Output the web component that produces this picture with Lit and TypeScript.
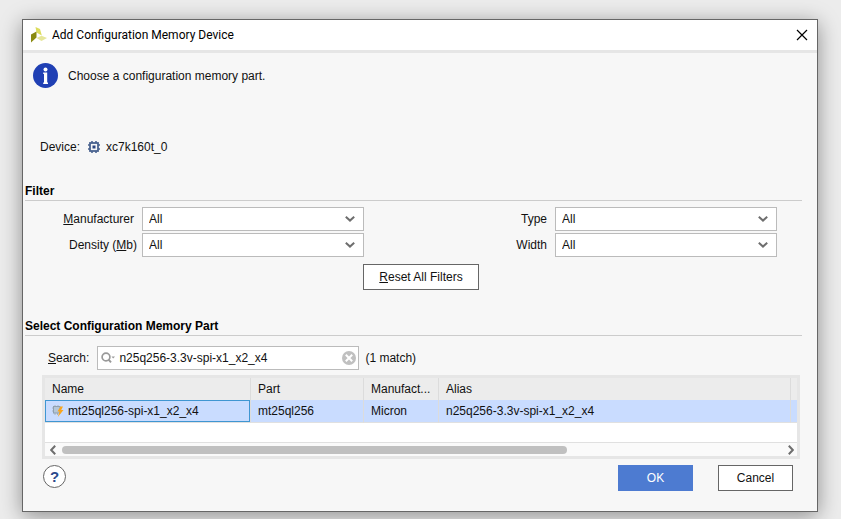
import { LitElement, html, css, svg } from "lit";
import { customElement, state } from "lit/decorators.js";

interface MemoryPart {
  name: string;
  part: string;
  manufacturer: string;
  alias: string;
}

const PARTS: MemoryPart[] = [
  {
    name: "mt25ql256-spi-x1_x2_x4",
    part: "mt25ql256",
    manufacturer: "Micron",
    alias: "n25q256-3.3v-spi-x1_x2_x4",
  },
];

const chevron = html`<svg class="chevron" width="10" height="6" viewBox="0 0 10 6" aria-hidden="true">
  <path d="M0.8 0.8 L5 4.6 L9.2 0.8" fill="none" stroke="#6e6e6e" stroke-width="2" />
</svg>`;

const chipPins = [4, 8].map(
  (p) => svg`<path stroke-width="1.6" d="M${p} 0V2 M${p} 10V12 M0 ${p}H2 M10 ${p}H12" />`
);

@customElement("app-root")
export class AppRoot extends LitElement {
  @state() private query = "n25q256-3.3v-spi-x1_x2_x4";

  static styles = css`
    :host {
      display: block;
      box-sizing: border-box;
      min-height: 100vh;
      padding: 19px 23px 7px 22px;
      background: #ececec;
      color: #111;
      font: 12px/16px "Liberation Sans", Arial, sans-serif;
      overflow: hidden;
    }
    * {
      box-sizing: border-box;
    }
    button,
    input,
    select {
      font: inherit;
      color: inherit;
      margin: 0;
      border-radius: 0;
    }
    svg {
      display: block;
      flex: none;
    }
    .dialog {
      border: 1px solid #666;
      background: #f7f7f7;
      box-shadow: 0 4px 20px rgba(0, 0, 0, 0.4);
    }
    .titlebar {
      display: flex;
      align-items: center;
      height: 33px;
      padding: 0 9px 0 8px;
      background: #fff;
      border-bottom: 3px solid #e6e6e6;
    }
    .title {
      flex: 1;
      margin: 0 0 0 5px;
      font: 12px/16px Roboto, "Open Sans", sans-serif;
      color: #000;
    }
    .plain {
      display: grid;
      place-items: center;
      padding: 0;
      border: 0;
      background: none;
    }
    .intro {
      display: flex;
      align-items: center;
      gap: 10px;
      padding: 10px 10px 0;
    }
    .intro p {
      margin: 0;
    }
    .device {
      display: flex;
      align-items: center;
      margin: 51px 0 0 17px;
    }
    .device svg {
      margin: 0 6px 0 8px;
    }
    .group {
      margin-left: 2px;
    }
    .heading {
      margin: 28px 15px 0 0;
      padding-bottom: 1px;
      border-bottom: 1px solid #ccc;
      font: bold 12px/16px "Liberation Sans", Arial, sans-serif;
      color: #000;
    }
    .filters {
      display: grid;
      grid-template-columns: 117px 1fr 191px 1fr;
      row-gap: 2px;
      align-items: center;
      padding: 6px 40px 0 0;
    }
    .filters label {
      text-align: right;
      padding-right: 8px;
    }
    .filters .snug {
      padding-right: 5px;
    }
    .combo {
      display: grid;
      position: relative;
      height: 24px;
    }
    .combo select {
      appearance: none;
      width: 100%;
      height: 24px;
      padding: 0 28px 0 6px;
      border: 1px solid #bbb;
      background: #fff;
    }
    .chevron {
      position: absolute;
      right: 9px;
      top: 9px;
      pointer-events: none;
    }
    .button {
      height: 26px;
      padding: 0;
      border: 1px solid #666;
      background: #fff;
      text-align: center;
    }
    .reset {
      display: block;
      width: 116px;
      margin: 7px auto 0;
    }
    .search {
      display: flex;
      align-items: center;
      margin: 10px 0 0 23px;
    }
    .search output {
      margin-left: 6px;
    }
    .field {
      display: flex;
      align-items: center;
      width: 262px;
      height: 24px;
      margin-left: 8px;
      padding: 0 2px 0 3px;
      border: 1px solid #bbb;
      background: #fff;
    }
    .field input {
      flex: 1;
      min-width: 0;
      height: 22px;
      padding: 0 0 0 4px;
      border: 0;
      outline: 0;
      background: none;
    }
    .results {
      margin: 5px 17px 0 17px;
      border: 3px solid #e6e6e6;
      background: #fff;
    }
    table {
      width: 100%;
      table-layout: fixed;
      border-collapse: separate;
      border-spacing: 0;
    }
    th,
    td {
      padding: 0 0 0 7px;
      border-right: 1px solid #dcdcdc;
      text-align: left;
      font-weight: normal;
      white-space: nowrap;
      overflow: hidden;
      text-overflow: ellipsis;
    }
    th {
      height: 22px;
      background: #ececec;
    }
    td {
      height: 23px;
      background: #c9dcff;
      border-bottom: 1px solid #e0e0e0;
    }
    th:last-child,
    td:last-child {
      padding: 0;
      border-right: 0;
    }
    .focused {
      box-shadow: inset 0 0 0 1px #3f96d2;
    }
    .cell {
      display: flex;
      align-items: center;
      gap: 4px;
    }
    .c-name {
      width: 206px;
    }
    .c-part {
      width: 113px;
    }
    .c-maker {
      width: 75px;
    }
    .c-rest {
      width: 6px;
    }
    .scroll {
      display: flex;
      align-items: center;
      height: 14px;
      margin-top: 19px;
      padding: 0 3px 0 5px;
      border-top: 1px solid #e0e0e0;
      background: #fafafa;
    }
    .track {
      flex: 1;
      margin: 0 5px 0 6px;
    }
    .thumb {
      width: 70%;
      height: 8px;
      border-radius: 4px;
      background: #c0c0c0;
    }
    .footer {
      display: flex;
      align-items: flex-start;
      padding: 6px 24px 20px 20px;
    }
    .help {
      width: 23px;
      height: 23px;
      margin-right: auto;
      border: 1px solid #666;
      border-radius: 50%;
      background: #fff;
      color: #2b4a8b;
      font: bold 15px/20px "Liberation Sans", Arial, sans-serif;
    }
    .footer .button {
      width: 75px;
      margin-left: 25px;
    }
    .footer .primary {
      border-color: #4d7bd1;
      background: #4d7bd1;
      color: #fff;
    }
  `;

  private combo(id: string) {
    return html`<span class="combo">
      <select id=${id}><option>All</option></select>${chevron}
    </span>`;
  }

  render() {
    const matches = PARTS.filter((p) => p.alias.includes(this.query));
    return html`
      <main class="dialog" role="dialog" aria-labelledby="title">
        <header class="titlebar">
          <svg width="16" height="16" viewBox="0 0 16 16" aria-hidden="true">
            <path d="M4.5 0L9 2L10.8 8.5L5.5 5.5Z" fill="#dcdc5c" />
            <path d="M0 7.5L5.5 4.5V10.5L0 15.5Z" fill="#8a8a10" />
            <path d="M5.5 11L10.5 8.8L16 11L10.5 14Z" fill="#e6e69a" />
          </svg>
          <h1 class="title" id="title">Add Configuration Memory Device</h1>
          <button class="plain" aria-label="Close">
            <svg width="12" height="12" viewBox="0 0 12 12">
              <path d="M1 1L11 11M11 1L1 11" stroke="#000" stroke-width="1.2" />
            </svg>
          </button>
        </header>

        <div class="intro">
          <svg width="25" height="25" viewBox="0 0 25 25" aria-hidden="true">
            <circle cx="12.5" cy="12.5" r="12.5" fill="#2040b4" />
            <circle cx="12.5" cy="6.4" r="2" fill="#fff" />
            <path d="M10.2 9.5H14.2V19.5H15V21H10.2V19.5H11V11H10.2Z" fill="#fff" />
          </svg>
          <p>Choose a configuration memory part.</p>
        </div>

        <div class="device">
          <span>Device:</span>
          <svg width="12" height="12" viewBox="0 0 12 12" fill="none" stroke="#4a638f" aria-hidden="true">
            <rect x="2" y="2" width="8" height="8" stroke-width="1.8" />
            <rect x="4.5" y="4.5" width="3" height="3" fill="#2d4780" stroke="none" />
            ${chipPins}
          </svg>
          <span>xc7k160t_0</span>
        </div>

        <section class="group">
          <h2 class="heading">Filter</h2>
          <div class="filters">
            <label for="maker"><u>M</u>anufacturer</label>${this.combo("maker")}
            <label for="type">Type</label>${this.combo("type")}
            <label class="snug" for="density">Density (<u>M</u>b)</label>${this.combo("density")}
            <label for="width">Width</label>${this.combo("width")}
          </div>
          <button class="button reset"><u>R</u>eset All Filters</button>
        </section>

        <section class="group">
          <h2 class="heading">Select Configuration Memory Part</h2>
          <div class="search">
            <label for="query"><u>S</u>earch:</label>
            <span class="field">
              <svg width="14" height="12" viewBox="0 0 14 12" aria-hidden="true">
                <circle cx="5" cy="5" r="3.9" fill="none" stroke="#999" stroke-width="1.7" />
                <path d="M7.6 7.6L10 10.3" stroke="#999" stroke-width="2" />
                <path d="M10.5 4.5H14L12.2 6.5Z" fill="#999" />
              </svg>
              <input
                id="query"
                .value=${this.query}
                @input=${(e: Event) => (this.query = (e.target as HTMLInputElement).value)}
              />
              <button class="plain" aria-label="Clear search" @click=${() => (this.query = "")}>
                <svg width="14" height="14" viewBox="0 0 14 14">
                  <circle cx="7" cy="7" r="7" fill="#c0c0c0" />
                  <path d="M3.8 3.8L10.2 10.2M10.2 3.8L3.8 10.2" stroke="#fff" stroke-width="2" />
                </svg>
              </button>
            </span>
            <output for="query">(${matches.length} match)</output>
          </div>

          <div class="results">
            <table>
              <colgroup>
                <col class="c-name" /><col class="c-part" /><col class="c-maker" /><col /><col class="c-rest" />
              </colgroup>
              <thead>
                <tr><th>Name</th><th>Part</th><th>Manufact...</th><th>Alias</th><th></th></tr>
              </thead>
              <tbody>
                ${matches.map(
                  (p) => html`<tr>
                    <td class="focused">
                      <span class="cell">
                        <svg width="12" height="12" viewBox="0 0 12 12" aria-hidden="true">
                          <path d="M3 0V2M6 0V2M3 8V10M5.5 8V10M0 3H1M0 6H1" stroke="#a9b4bf" />
                          <rect x="1.5" y="1.5" width="6.5" height="6.5" fill="#b4c6d8" stroke="#8fa0b0" />
                          <path d="M8.5 1.5L5.5 6.5H7.5L5.8 12L11.5 5H9.2L11 1.5Z" fill="#f9a61e" />
                        </svg>
                        <span>${p.name}</span>
                      </span>
                    </td>
                    <td>${p.part}</td>
                    <td>${p.manufacturer}</td>
                    <td>${p.alias}</td>
                    <td></td>
                  </tr>`
                )}
              </tbody>
            </table>
            <div class="scroll">
              <button class="plain" aria-label="Scroll left">
                <svg width="6" height="10" viewBox="0 0 6 10">
                  <path d="M5.2 0.8L1.2 5L5.2 9.2" fill="none" stroke="#6e6e6e" stroke-width="2" />
                </svg>
              </button>
              <div class="track"><div class="thumb"></div></div>
              <button class="plain" aria-label="Scroll right">
                <svg width="6" height="10" viewBox="0 0 6 10">
                  <path d="M0.8 0.8L4.8 5L0.8 9.2" fill="none" stroke="#6e6e6e" stroke-width="2" />
                </svg>
              </button>
            </div>
          </div>
        </section>

        <footer class="footer">
          <button class="plain help" aria-label="Help">?</button>
          <button class="button primary">OK</button>
          <button class="button">Cancel</button>
        </footer>
      </main>
    `;
  }
}
